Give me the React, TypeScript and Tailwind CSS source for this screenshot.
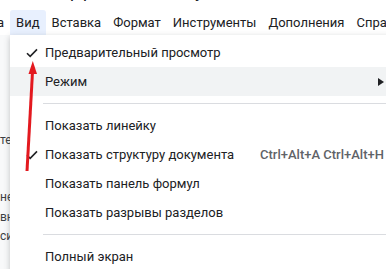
import React from 'react';

const font = { fontFamily: 'Roboto, "Noto Sans", Arial, sans-serif' };

const Check: React.FC = () => (
  <svg width="12" height="10" viewBox="0 0 12 10" className="text-[#202124]">
    <path d="M1 5.2 L4.2 8.4 L11 1.4" fill="none" stroke="currentColor" strokeWidth="1.6" />
  </svg>
);

type Item = { label: string; checked?: boolean; shortcut?: string; submenu?: boolean; active?: boolean } | 'sep';

const items: Item[] = [
  { label: 'Предварительный просмотр', checked: true },
  { label: 'Режим', submenu: true, active: true },
  'sep',
  { label: 'Показать линейку' },
  { label: 'Показать структуру документа', checked: true, shortcut: 'Ctrl+Alt+A Ctrl+Alt+H' },
  { label: 'Показать панель формул' },
  { label: 'Показать разрывы разделов' },
  'sep',
  { label: 'Полный экран' },
];

const menuBar = ['а', 'Вид', 'Вставка', 'Формат', 'Инструменты', 'Дополнения', 'Справка'];

const App: React.FC = () => {
  return (
    <div className="relative w-[386px] h-[269px] overflow-hidden bg-white" style={font}>
      {/* title, mostly scrolled off */}
      <div className="h-[10px] overflow-hidden">
        <div className="-mt-[20px] pl-[2px] text-[18px] leading-[22px] text-[#202124] whitespace-nowrap">
          ентно эффективное обучение. Часть 1
        </div>
      </div>

      {/* menu bar */}
      <div className="flex h-[25px] items-center text-[13px] text-[#202124] whitespace-nowrap -ml-[9px]">
        {menuBar.map((m) => (
          <div
            key={m}
            className={`h-[25px] flex items-center px-[6px] rounded-t-[3px] ${m === 'Вид' ? 'bg-[#e8f0fe]' : ''}`}
          >
            {m}
          </div>
        ))}
      </div>

      {/* document area behind menu */}
      <div className="h-[234px] bg-[#f8f9fa] flex">
        <div className="w-[10px] flex flex-col text-[12px] leading-[16px] text-[#3c4043] whitespace-nowrap overflow-hidden">
          <div className="h-[97px] shrink-0" />
          <div>те</div>
          <div className="h-[41px] shrink-0" />
          <div>не</div>
          <div className="h-[4px] shrink-0" />
          <div>вн</div>
          <div className="h-[3px] shrink-0" />
          <div>си</div>
        </div>
      </div>

      {/* dropdown */}
      <div className="absolute left-[10px] top-[35px] w-[420px] bg-white pt-[3px] pb-[6px] shadow-[0_2px_6px_rgba(60,64,67,0.3)]">
        {items.map((it, i) =>
          it === 'sep' ? (
            <div key={i} className="ml-[33px] my-[7px] h-px bg-[#dadce0]" />
          ) : (
            <div
              key={i}
              className={`flex h-[29px] items-center text-[13px] text-[#202124] whitespace-nowrap ${it.active ? 'bg-[#f1f3f4]' : ''}`}
            >
              <div className="w-[35px] flex justify-end pr-[7px]">{it.checked && <Check />}</div>
              <div className="w-[215px]">{it.label}</div>
              {it.shortcut && <div className="text-[#5f6368] font-medium">{it.shortcut}</div>}
              {it.submenu && (
                <div className="ml-[118px]">
                  <svg width="6" height="8" viewBox="0 0 6 8">
                    <path d="M0 0 L6 4 L0 8 Z" fill="#202124" />
                  </svg>
                </div>
              )}
            </div>
          )
        )}
      </div>

      {/* red annotation arrow */}
      <svg className="absolute left-0 top-0 pointer-events-none" width="386" height="269">
        <line x1="27" y1="171" x2="32.5" y2="72" stroke="#e3191f" strokeWidth="3" />
        <polygon points="32.8,61 28.5,74 37,74" fill="#e3191f" />
      </svg>
    </div>
  );
};

export default App;
